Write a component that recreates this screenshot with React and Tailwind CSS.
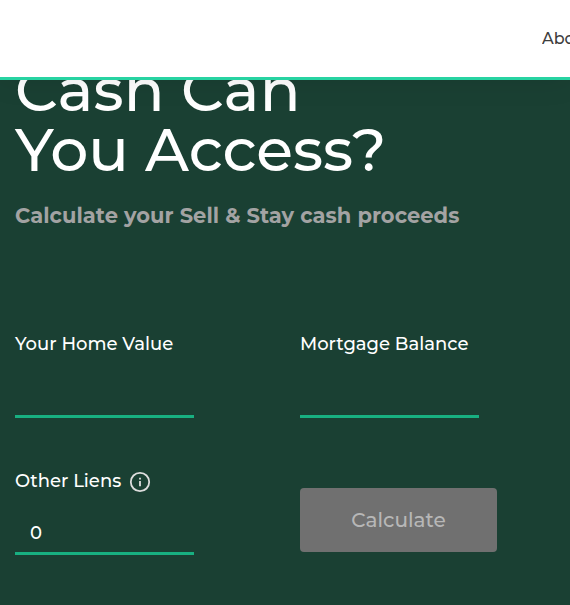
function Field({ label, value, info }) {
  return (
    <div className="w-[179px]">
      <label className="flex h-6 items-center gap-2 whitespace-nowrap text-[18px] font-medium leading-6">
        {label}
        {info && (
          <svg className="mt-px h-[22px] w-[22px] text-[#dddddd]" viewBox="0 0 22 22" fill="none">
            <circle cx="11" cy="11" r="9.2" stroke="currentColor" strokeWidth="1.8" />
            <path d="M11 10v5.2M11 6.7v1.8" stroke="currentColor" strokeWidth="1.8" />
          </svg>
        )}
      </label>
      <div className="mt-2 h-[54px] border-b-[3px] border-[#18b081] pl-[15px] pt-[19px] text-[18px] font-medium leading-[26px]">
        {value}
      </div>
    </div>
  );
}

export default function App() {
  return (
    <div className="h-[605px] w-[570px] overflow-hidden bg-[#1a4033] font-['Montserrat','Inter',sans-serif] text-white">
      <header className="relative z-10 flex h-20 justify-end border-b-[3px] border-[#27d3a2] bg-white shadow-[0_0_30px_rgba(0,0,0,0.1)]">
        <span className="mt-[27px] h-6 w-[28px] overflow-hidden whitespace-nowrap text-base font-medium text-[#3d3d3d]">About</span>
      </header>
      <main className="px-[15px]">
        <h1 className="-mt-5 whitespace-nowrap text-[60px] font-medium leading-[60px]">
          <span className="tracking-[0.15px]">Cash Can</span>
          <br />
          You Access?
        </h1>
        <p className="mt-5 whitespace-nowrap text-[21px] font-bold leading-8 tracking-[0.05px] text-[#a3a3a3]">
          Calculate your Sell &amp; Stay cash proceeds
        </p>
        <div className="mt-[100px] grid grid-cols-[285px_1fr] gap-y-[51px]">
          <Field label="Your Home Value" />
          <Field label="Mortgage Balance" />
          <Field label="Other Liens" value="0" info />
          <button className="mt-[19px] h-16 w-[197px] rounded bg-[#707070] text-[20px] font-medium text-[#b7b7b7]">
            Calculate
          </button>
        </div>
      </main>
    </div>
  );
}
